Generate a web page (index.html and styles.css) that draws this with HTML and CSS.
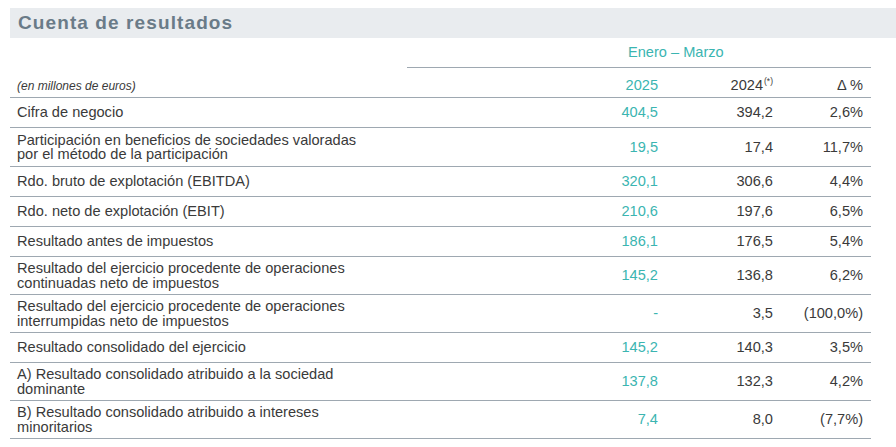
FILE: index.html
```html
<!DOCTYPE html>
<html lang="es">
<head>
<meta charset="utf-8">
<title>Cuenta de resultados</title>
<link rel="stylesheet" href="styles.css">
</head>
<body>
<section class="report">
  <h1 class="title">Cuenta de resultados</h1>
  <div class="table">
    <div class="row period-row">
      <div class="period">Enero – Marzo</div>
    </div>
    <div class="row head-row">
      <div class="label unit">(en millones de euros)</div>
      <div class="num cur">2025</div>
      <div class="num prev">2024<sup>(*)</sup></div>
      <div class="num delta">Δ %</div>
    </div>
    <div class="row">
      <div class="label">Cifra de negocio</div>
      <div class="num cur">404,5</div>
      <div class="num prev">394,2</div>
      <div class="num delta">2,6%</div>
    </div>
    <div class="row double">
      <div class="label">Participación en beneficios de sociedades valoradas<br>por el método de la participación</div>
      <div class="num cur">19,5</div>
      <div class="num prev">17,4</div>
      <div class="num delta">11,7%</div>
    </div>
    <div class="row">
      <div class="label">Rdo. bruto de explotación (EBITDA)</div>
      <div class="num cur">320,1</div>
      <div class="num prev">306,6</div>
      <div class="num delta">4,4%</div>
    </div>
    <div class="row">
      <div class="label">Rdo. neto de explotación (EBIT)</div>
      <div class="num cur">210,6</div>
      <div class="num prev">197,6</div>
      <div class="num delta">6,5%</div>
    </div>
    <div class="row">
      <div class="label">Resultado antes de impuestos</div>
      <div class="num cur">186,1</div>
      <div class="num prev">176,5</div>
      <div class="num delta">5,4%</div>
    </div>
    <div class="row double">
      <div class="label">Resultado del ejercicio procedente de operaciones<br>continuadas neto de impuestos</div>
      <div class="num cur">145,2</div>
      <div class="num prev">136,8</div>
      <div class="num delta">6,2%</div>
    </div>
    <div class="row double">
      <div class="label">Resultado del ejercicio procedente de operaciones<br>interrumpidas neto de impuestos</div>
      <div class="num cur">-</div>
      <div class="num prev">3,5</div>
      <div class="num delta">(100,0%)</div>
    </div>
    <div class="row">
      <div class="label">Resultado consolidado del ejercicio</div>
      <div class="num cur">145,2</div>
      <div class="num prev">140,3</div>
      <div class="num delta">3,5%</div>
    </div>
    <div class="row double">
      <div class="label">A) Resultado consolidado atribuido a la sociedad<br>dominante</div>
      <div class="num cur">137,8</div>
      <div class="num prev">132,3</div>
      <div class="num delta">4,2%</div>
    </div>
    <div class="row double">
      <div class="label">B) Resultado consolidado atribuido a intereses<br>minoritarios</div>
      <div class="num cur">7,4</div>
      <div class="num prev">8,0</div>
      <div class="num delta">(7,7%)</div>
    </div>
  </div>
</section>
</body>
</html>
```

FILE: styles.css
```css
html, body {
  margin: 0;
  padding: 0;
  background: #ffffff;
}

body {
  font-family: "Liberation Sans", Arial, sans-serif;
  color: #3a3a3a;
}

.report {
  padding: 8px 0 0 10px;
}

.title {
  margin: 0;
  height: 30px;
  box-sizing: border-box;
  padding: 0 0 0 8px;
  display: flex;
  align-items: center;
  background: #e9ecef;
  color: #6a7b88;
  font-size: 19px;
  font-weight: bold;
  letter-spacing: 1.1px;
}

.table {
  width: 861px;
  font-size: 14.6px;
  line-height: 14.5px;
}

.row {
  display: grid;
  grid-template-columns: 397px 261px 115px 88px;
  align-items: center;
  min-height: 29px;
  box-sizing: content-box;
  border-bottom: 1px solid #9ea8b1;
}

.row.double {
  min-height: 37px;
}

.row.double:nth-child(4) {
  min-height: 38px;
}

.period-row {
  display: flex;
  min-height: 30px;
  border-bottom: none;
}

.period {
  margin-left: 397px;
  flex: 1;
  align-self: stretch;
  display: flex;
  align-items: center;
  padding-left: 221px;
  border-bottom: 1px solid #9ea8b1;
  color: #3bb5b1;
}

.label {
  padding-left: 7px;
}

.num {
  text-align: right;
}

.cur {
  padding-right: 10px;
  color: #3bb5b1;
}

.prev {
  padding-right: 10px;
}

.delta {
  padding-right: 8px;
}

.head-row {
  align-items: baseline;
  padding-top: 10px;
  min-height: 19px;
}

.unit {
  font-size: 12px;
  font-style: italic;
}

.prev sup {
  font-size: 8.5px;
  line-height: 0;
  vertical-align: 6px;
  margin-left: 1px;
}
```
